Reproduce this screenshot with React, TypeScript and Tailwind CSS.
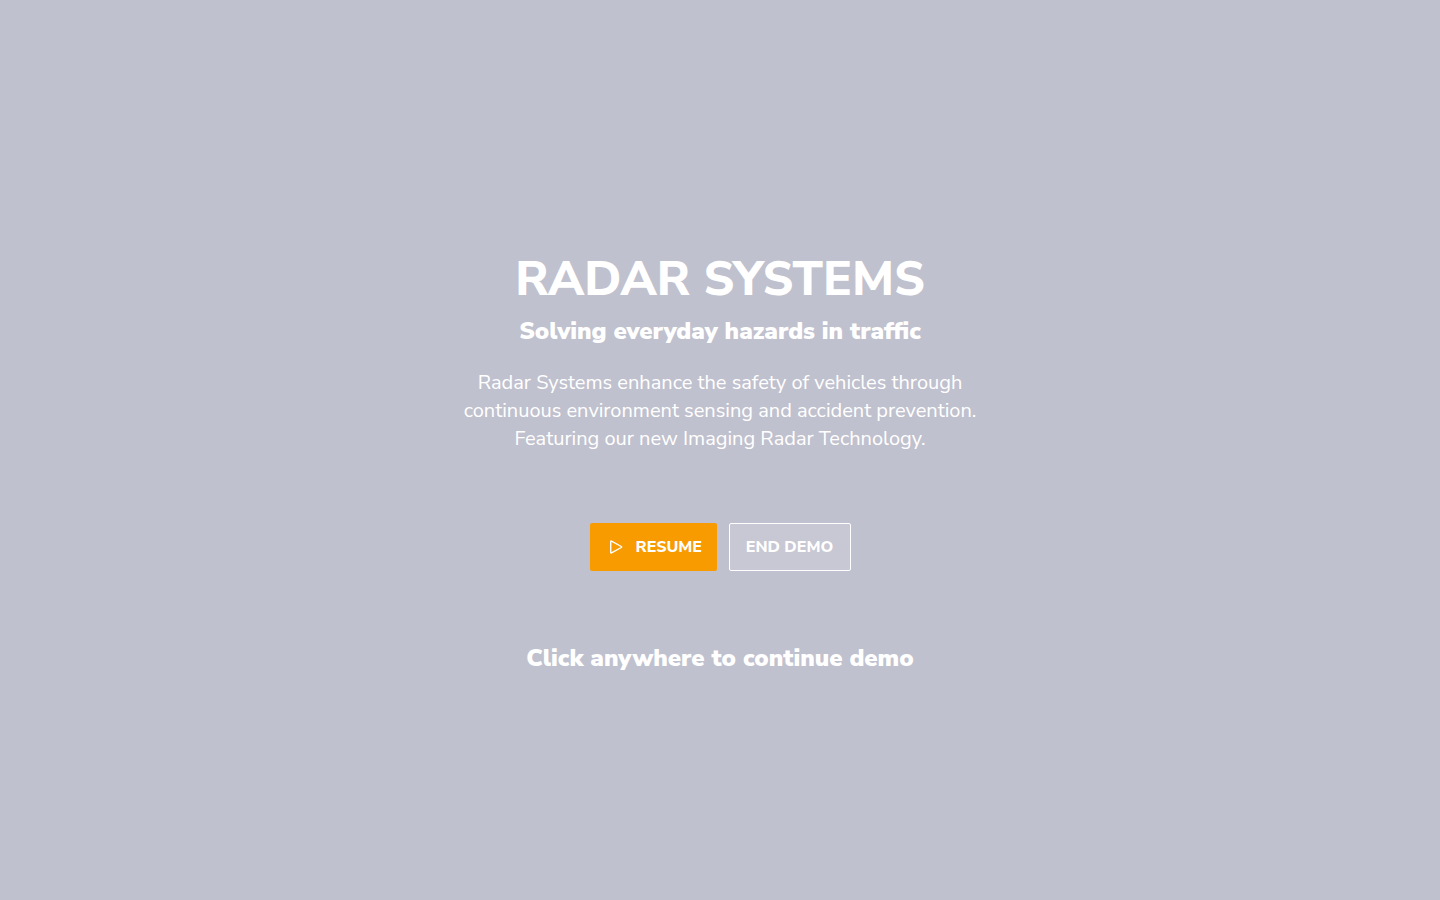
export default function App() {
  return (
    <main className="flex min-h-screen flex-col items-center justify-center bg-[#c0c1ce] px-6 pt-6 text-center font-['Nunito_Sans','Nunito','Open_Sans',sans-serif] text-white antialiased">
      <h1 className="text-5xl leading-[56px] font-extrabold">RADAR SYSTEMS</h1>
      <h2 className="mt-2 text-2xl leading-8 font-black">Solving everyday hazards in traffic</h2>
      <p className="mt-[22px] max-w-[540px] text-xl leading-7 font-normal">
        Radar Systems enhance the safety of vehicles through
        <br />
        continuous environment sensing and accident prevention.
        <br />
        Featuring our new Imaging Radar Technology.
      </p>
      <div className="mt-[70px] flex gap-3">
        <button type="button" className="flex h-12 min-w-[127px] items-center gap-3 rounded-xs bg-[#f79b00] pr-3 pl-[18px] text-base font-extrabold">
          <svg viewBox="0 0 16 16" className="size-4" fill="none" stroke="currentColor" strokeWidth="1.4" strokeLinejoin="round" aria-hidden="true">
            <path d="M2.7 2.6v10.8q0 .9.8.5l9.8-5.4q.8-.5 0-1L3.5 2.1q-.8-.4-.8.5z" />
          </svg>
          RESUME
        </button>
        <button type="button" className="h-12 min-w-[122px] rounded-xs border border-white bg-white/12 px-[15px] text-base font-extrabold">END DEMO</button>
      </div>
      <p className="mt-[71px] text-2xl leading-8 font-black">Click anywhere to continue demo</p>
    </main>
  );
}
